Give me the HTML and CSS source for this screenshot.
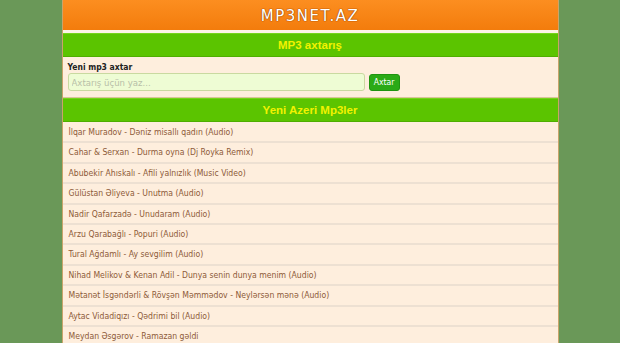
FILE: index.html
```html
<!DOCTYPE html>
<html lang="az">
<head>
<meta charset="utf-8">
<title>MP3NET.AZ</title>
<link rel="stylesheet" href="styles.css">
</head>
<body>
<div class="wrap">
  <header class="logo-bar"><span class="logo">MP3NET.AZ</span></header>
  <div class="sep"></div>
  <h2 class="sec-title">MP3 axtarış</h2>
  <form class="search">
    <div class="label">Yeni mp3 axtar</div>
    <div class="row-in">
      <input class="field" type="text" placeholder="Axtarış üçün yaz...">
      <button class="btn" type="button">Axtar</button>
    </div>
  </form>
  <h2 class="sec-title">Yeni Azeri Mp3ler</h2>
  <ul class="list">
    <li>İlqar Muradov - Dəniz misallı qadın (Audio)</li>
    <li>Cahar &amp; Serxan - Durma oyna (Dj Royka Remix)</li>
    <li>Abubekir Ahıskalı - Afili yalnızlık (Music Video)</li>
    <li>Gülüstan Əliyeva - Unutma (Audio)</li>
    <li>Nadir Qafarzadə - Unudaram (Audio)</li>
    <li>Arzu Qarabağlı - Popuri (Audio)</li>
    <li>Tural Ağdamlı - Ay sevgilim (Audio)</li>
    <li>Nihad Melikov &amp; Kenan Adil - Dunya senin dunya menim (Audio)</li>
    <li>Mətanət İsgəndərli &amp; Rövşən Məmmədov - Neylərsən mənə (Audio)</li>
    <li>Aytac Vidadiqızı - Qədrimi bil (Audio)</li>
    <li>Meydan Əsgərov - Ramazan gəldi</li>
  </ul>
</div>
</body>
</html>
```
FILE: styles.css
```css
html, body {
  margin: 0;
  padding: 0;
}
body {
  background: #6a9858;
  font-family: "DejaVu Sans Condensed", "DejaVu Sans", sans-serif;
  height: 343px;
  overflow: hidden;
}
.wrap {
  width: 495px;
  margin: 0 auto;
  border-left: 1px solid #c9a46a;
  border-right: 1px solid #c9a46a;
  background: #feeedd;
  min-height: 343px;
}
.logo-bar {
  height: 30px;
  background: linear-gradient(#fc8e20, #f37c0c);
  display: flex;
  align-items: center;
  justify-content: center;
}
.logo {
  color: #fff;
  font-family: "DejaVu Sans", sans-serif;
  font-size: 15px;
  letter-spacing: 1.5px;
  margin-top: 1px;
  text-shadow: 0 0 1px #a04800, 0 0 1px #a04800, 0 0 1px #a04800;
}
.sep {
  height: 3px;
  background: #fdf3e6;
}
.sec-title {
  margin: 0;
  height: 22px;
  line-height: 22px;
  background: #5bc400;
  border-top: 1px solid #76d41c;
  border-bottom: 1px solid #4fae00;
  color: #f2f200;
  font-family: "Liberation Sans", Arial, sans-serif;
  font-size: 11.5px;
  font-weight: bold;
  text-align: center;
}
.search {
  margin: 0;
  padding: 3px 5px 6px;
  border-bottom: 1px solid #d9c49a;
}
.label {
  font-family: "DejaVu Sans Condensed", sans-serif;
  font-size: 8.5px;
  font-weight: bold;
  color: #222;
  height: 12px;
  line-height: 12px;
  padding-top: 1px;
}
.row-in {
  display: flex;
  align-items: center;
  gap: 4px;
}
.field {
  width: 297px;
  height: 18px;
  box-sizing: border-box;
  border: 1px solid #c9d9a0;
  border-radius: 3px;
  background: #eefcd4;
  padding: 0 3px;
  font-family: "DejaVu Sans Condensed", sans-serif;
  font-size: 9.5px;
  color: #555;
}
.field::placeholder {
  color: #b8c0a8;
}
.btn {
  height: 17px;
  width: 31px;
  padding: 0;
  border: 1px solid #1f9410;
  border-radius: 3px;
  background: #2aaa16;
  color: #fff;
  font-family: "DejaVu Sans Condensed", sans-serif;
  font-size: 8.5px;
}
.list {
  list-style: none;
  margin: 0;
  padding: 1px 0 0;
}
.list li {
  height: 18.4px;
  line-height: 18.4px;
  border-bottom: 2px solid #ede0d2;
  padding-left: 6px;
  font-family: "DejaVu Sans Condensed", sans-serif;
  font-size: 8.6px;
  color: #8d5a38;
  white-space: nowrap;
}
```
